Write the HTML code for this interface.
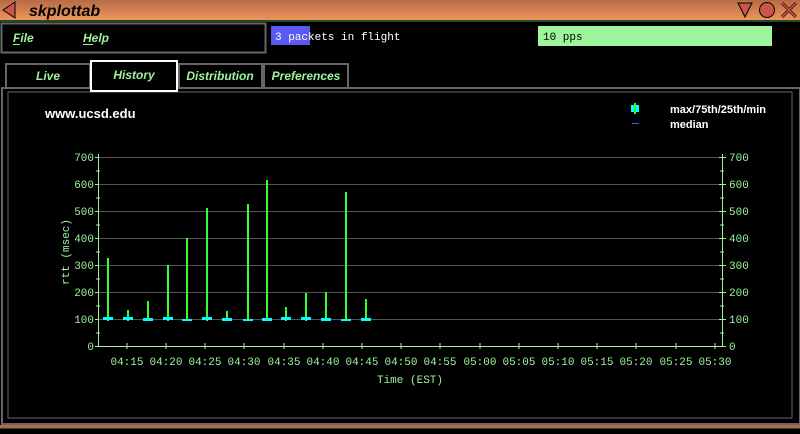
<!DOCTYPE html>
<html><head><style>
body{margin:0;width:800px;height:429px;background:#000;overflow:hidden;font-family:"Liberation Sans",sans-serif}
</style></head><body>
<svg width="800" height="429" xmlns="http://www.w3.org/2000/svg" font-family="Liberation Sans, sans-serif">
<defs><linearGradient id="tg" x1="0" y1="0" x2="0" y2="1"><stop offset="0" stop-color="#b86a48"/><stop offset="1" stop-color="#f0985a"/></linearGradient></defs>
<rect x="0" y="0" width="800" height="21" fill="url(#tg)"/>
<rect x="0" y="20" width="800" height="2" fill="#1d4a2a"/>
<polygon points="3,10 15,2 15,18" fill="#c8564a" stroke="#000"/>
<text x="29" y="16" font-size="16" font-style="italic" font-weight="bold" fill="#000">skplottab</text>
<polygon points="738,3 752,3 745,17" fill="#c8564a" stroke="#000"/>
<circle cx="767" cy="10" r="7.5" fill="#c8564a" stroke="#000"/>
<path d="M782,3 L796,17 M796,3 L782,17" stroke="#000" stroke-width="3"/>
<path d="M782,3 L796,17 M796,3 L782,17" stroke="#c8564a" stroke-width="1.6"/>
<rect x="1.5" y="23.5" width="264" height="29" fill="none" stroke="#666" stroke-width="2"/>
<text x="13" y="42" font-size="12" font-style="italic" font-weight="bold" fill="#9ef59e">File</text>
<rect x="13" y="44" width="7" height="1" fill="#9ef59e"/>
<text x="83" y="42" font-size="12" font-style="italic" font-weight="bold" fill="#9ef59e">Help</text>
<rect x="83" y="44" width="10" height="1" fill="#9ef59e"/>
<rect x="271" y="26" width="39" height="19" fill="#5a5af0"/>
<text x="275" y="40" font-size="11" font-family="Liberation Mono, monospace" fill="#fff">3 packets in flight</text>
<rect x="538" y="26" width="234" height="20" fill="#9ef59e"/>
<text x="543" y="40" font-size="11" font-family="Liberation Mono, monospace" fill="#000">10 pps</text>
<rect x="6" y="64" width="84" height="24" fill="none" stroke="#666" stroke-width="2"/>
<rect x="179" y="64" width="83" height="24" fill="none" stroke="#666" stroke-width="2"/>
<rect x="264" y="64" width="84" height="24" fill="none" stroke="#666" stroke-width="2"/>
<rect x="2" y="88" width="798" height="336" fill="none" stroke="#666" stroke-width="2"/>
<rect x="8" y="92" width="784" height="326" fill="none" stroke="#666" stroke-width="1"/>
<rect x="91" y="61" width="86" height="30" fill="#000" stroke="#fff" stroke-width="2"/>
<g font-size="12" font-style="italic" font-weight="bold" fill="#9ef59e" text-anchor="middle">
<text x="48" y="80">Live</text><text x="134" y="79">History</text><text x="220" y="80">Distribution</text><text x="306" y="80">Preferences</text></g>
<text x="45" y="118" font-size="13" font-weight="bold" fill="#fff">www.ucsd.edu</text>
<rect x="631" y="105" width="8" height="7" fill="#0ff"/><rect x="634" y="103" width="2" height="11" fill="#3f3"/>
<rect x="632" y="123" width="7" height="1" fill="#55f"/>
<text x="670" y="113" font-size="11" font-weight="bold" fill="#fff">max/75th/25th/min</text>
<text x="670" y="128" font-size="11" font-weight="bold" fill="#fff">median</text>
<g stroke="#555" stroke-width="1">
<line x1="98" y1="157.5" x2="722" y2="157.5"/><line x1="98" y1="184.5" x2="722" y2="184.5"/><line x1="98" y1="211.5" x2="722" y2="211.5"/><line x1="98" y1="238.5" x2="722" y2="238.5"/><line x1="98" y1="265.5" x2="722" y2="265.5"/><line x1="98" y1="292.5" x2="722" y2="292.5"/><line x1="98" y1="319.5" x2="722" y2="319.5"/></g>
<g stroke="#9ef59e" stroke-width="1">
<line x1="98.5" y1="154" x2="98.5" y2="346"/><line x1="722.5" y1="154" x2="722.5" y2="346"/><line x1="98" y1="346.5" x2="723" y2="346.5"/>
</g>
<g stroke="#9ef59e">
<path d="M95,157.5h4M95,184.5h4M95,211.5h4M95,238.5h4M95,265.5h4M95,292.5h4M95,319.5h4M95,346.5h4M96,171h4M96,198h4M96,225h4M96,252h4M96,279h4M96,306h4M96,333h4"/>
<path d="M719,157.5h7M719,184.5h7M719,211.5h7M719,238.5h7M719,265.5h7M719,292.5h7M719,319.5h7M719,346.5h7M720,171h4M720,198h4M720,225h4M720,252h4M720,279h4M720,306h4M720,333h4"/>
</g>
<g font-size="11" font-family="Liberation Mono, monospace" fill="#9ef59e">
<g text-anchor="end"><text x="94" y="161">700</text><text x="94" y="188">600</text><text x="94" y="215">500</text><text x="94" y="242">400</text><text x="94" y="269">300</text><text x="94" y="296">200</text><text x="94" y="323">100</text><text x="94" y="350">0</text></g>
<g><text x="729" y="161">700</text><text x="729" y="188">600</text><text x="729" y="215">500</text><text x="729" y="242">400</text><text x="729" y="269">300</text><text x="729" y="296">200</text><text x="729" y="323">100</text><text x="729" y="350">0</text></g>
<text x="69" y="252" transform="rotate(-90 69 252)" text-anchor="middle">rtt (msec)</text>
<text x="410" y="383" text-anchor="middle">Time (EST)</text>
<g text-anchor="middle">
<text x="127" y="365">04:15</text><text x="166" y="365">04:20</text><text x="205" y="365">04:25</text><text x="244" y="365">04:30</text><text x="284" y="365">04:35</text><text x="323" y="365">04:40</text><text x="362" y="365">04:45</text><text x="401" y="365">04:50</text><text x="440" y="365">04:55</text><text x="480" y="365">05:00</text><text x="519" y="365">05:05</text><text x="558" y="365">05:10</text><text x="597" y="365">05:15</text><text x="636" y="365">05:20</text><text x="676" y="365">05:25</text><text x="715" y="365">05:30</text>
</g></g>
<path stroke="#9ef59e" d="M127,343v6M166,343v6M205,343v6M244,343v6M284,343v6M323,343v6M362,343v6M401,343v6M440,343v6M480,343v6M519,343v6M558,343v6M597,343v6M636,343v6M676,343v6M715,343v6"/>
<g stroke="#3f3" stroke-width="2">
<path d="M108,258V321M128,310V321M148,301V321M168,265V321M187,238V321M207,208V321M227,311V321M248,204V321M267,180V321M286,307V321M306,293V321M326,292V321M346,192V321M366,299V321"/></g>
<g fill="#0ff">
<rect x="103" y="317" width="10" height="3"/><rect x="123" y="317" width="10" height="3"/><rect x="143" y="318" width="10" height="3"/><rect x="163" y="317" width="10" height="3"/><rect x="182" y="319" width="10" height="2"/><rect x="202" y="317" width="10" height="3"/><rect x="222" y="318" width="10" height="3"/><rect x="243" y="319" width="10" height="2"/><rect x="262" y="318" width="10" height="3"/><rect x="281" y="317" width="10" height="3"/><rect x="301" y="317" width="10" height="3"/><rect x="321" y="318" width="10" height="3"/><rect x="341" y="319" width="10" height="2"/><rect x="361" y="318" width="10" height="3"/></g>
<rect x="0" y="425" width="800" height="4" fill="#b86a48"/><rect x="0" y="428" width="800" height="1" fill="#1d4a2a"/>
</svg>
</body></html>
